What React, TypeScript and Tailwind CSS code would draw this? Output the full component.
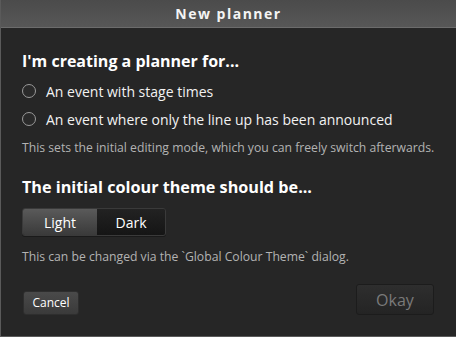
import React from "react";

const font = { fontFamily: '"Segoe UI", "Open Sans", "Noto Sans", sans-serif' };

function Radio({ label }: { label: string }) {
  return (
    <label className="flex items-center gap-[10px] h-[28px] text-[14px] text-[#f2f2f2]">
      <span className="size-[14px] rounded-full border border-[#9a9a9a] bg-[#2a2a2a]" />
      <span>{label}</span>
    </label>
  );
}

export default function App() {
  return (
    <div
      className="w-[456px] h-[337px] bg-[#262626] border-l border-b border-[#5a5a5a] flex flex-col overflow-hidden"
      style={font}
    >
      <div className="h-[28px] shrink-0 bg-linear-to-b from-[#4b4b4b] to-[#575757] border-b border-[#6c6c6c] flex items-center justify-center">
        <span className="text-[14px] font-bold tracking-[1.5px] text-[#f4f4f4]">New planner</span>
      </div>

      <div className="flex flex-col px-[21px] pt-[20px]">
        <h2 className="text-[16px] font-bold text-white leading-[26px]">I'm creating a planner for...</h2>
        <div className="flex flex-col mt-[3px]">
          <Radio label="An event with stage times" />
          <Radio label="An event where only the line up has been announced" />
        </div>
        <p className="mt-[6px] text-[12.2px] text-[#b3b3b3] leading-[18px]">
          This sets the initial editing mode, which you can freely switch afterwards.
        </p>

        <h2 className="mt-[17px] text-[16.2px] font-bold text-white leading-[26px]">
          The initial colour theme should be...
        </h2>
        <div className="mt-[8px] flex w-[144px] h-[28px] rounded-[3px] overflow-hidden border border-[#3a3a3a] shadow-[0_1px_0_#1a1a1a]">
          <button className="w-[74px] bg-linear-to-b from-[#5a5a5a] to-[#3a3a3a] text-[14px] text-white">Light</button>
          <button className="flex-1 bg-linear-to-b from-[#222222] to-[#151515] text-[14px] text-white">Dark</button>
        </div>
        <p className="mt-[12px] text-[12.2px] text-[#b3b3b3] leading-[18px]">
          This can be changed via the `Global Colour Theme` dialog.
        </p>

        <div className="mt-[18px] flex items-end justify-between pr-[1px]">
          <button className="ml-[1px] w-[56px] h-[24px] rounded-[3px] bg-linear-to-b from-[#4a4a4a] to-[#3a3a3a] border border-[#2e2e2e] text-[12px] text-white">
            Cancel
          </button>
          <button className="w-[78px] h-[31px] rounded-[3px] bg-linear-to-b from-[#2e2e2e] to-[#242424] border border-[#1c1c1c] text-[16px] text-[#7a7a7a]">
            Okay
          </button>
        </div>
      </div>
    </div>
  );
}
